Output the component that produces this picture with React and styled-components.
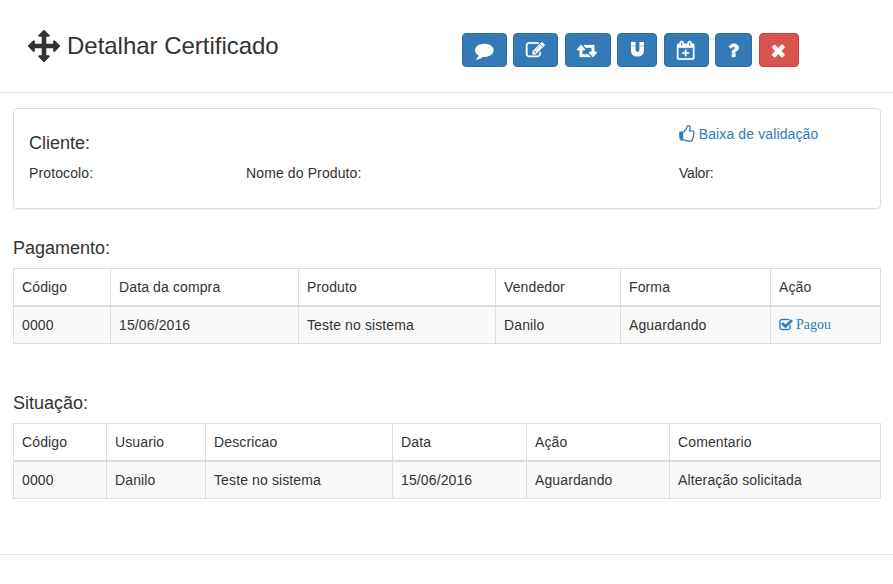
import React from 'react';
import styled, { createGlobalStyle } from 'styled-components';

const GlobalStyle = createGlobalStyle`
  *, *::before, *::after { box-sizing: border-box; }
  body {
    margin: 0;
    background: #fff;
    color: #333;
    font: 14px/20px "Liberation Sans", Arial, sans-serif;
    letter-spacing: 0.12px;
  }
`;

/* name: [view box width, path]; every glyph sits on a 1792-unit em */
const GLYPHS = {
  move: [1792, 'M1792 896q0 26-19 45l-256 256q-19 19-45 19t-45-19-19-45v-128h-384v384h128q26 0 45 19t19 45-19 45l-256 256q-19 19-45 19t-45-19l-256-256q-19-19-19-45t19-45 45-19h128v-384h-384v128q0 26-19 45t-45 19-45-19l-256-256q-19-19-19-45t19-45l256-256q19-19 45-19t45 19 19 45v128h384v-384h-128q-26 0-45-19t-19-45 19-45l256-256q19-19 45-19t45 19l256 256q19 19 19 45t-19 45-45 19h-128v384h384v-128q0-26 19-45t45-19 45 19l256 256q19 19 19 45z'],
  comment: [1792, 'M1792 896q0 174-120 321.5t-326 233-450 85.5q-70 0-145-8-198 175-460 242-49 14-114 22-17 2-30.5-9t-17.5-29v-1q-3-4-.5-12t2-10 4.5-9.5l6-9 7-8.5 8-9q7-8 31-34.5t34.5-38 31-39.5 32.5-51 27-59 26-76q-157-89-247.5-220t-90.5-281q0-130 71-248.5t191-204.5 286-136.5 348-50.5q244 0 450 85.5t326 233 120 321.5z'],
  edit: [1792, 'M888 1184l116-116-152-152-116 116v56h96v96h56zm440-720q-16-16-33 1l-350 350q-17 17-1 33t33-1l350-350q17-17 1-33zm80 594v190q0 119-84.5 203.5t-203.5 84.5h-832q-119 0-203.5-84.5t-84.5-203.5v-832q0-119 84.5-203.5t203.5-84.5h832q63 0 117 25 15 7 18 23 3 17-9 29l-49 49q-14 14-32 8-23-6-45-6h-832q-66 0-113 47t-47 113v832q0 66 47 113t113 47h832q66 0 113-47t47-113v-126q0-13 9-22l64-64q15-15 35-7t20 29zm-96-738l288 288-672 672h-288v-288zm444 132l-92 92-288-288 92-92q28-28 68-28t68 28l152 152q28 28 28 68t-28 68z'],
  retweet: [1920, 'M1280 1504q0 13-9.5 22.5t-22.5 9.5h-960q-8 0-13.5-2t-9-7-5.5-8-3-11.5-1-11.5v-600h-192q-26 0-45-19t-19-45q0-24 15-41l320-384q19-22 49-22t49 22l320 384q15 17 15 41 0 26-19 45t-45 19h-192v384h576q16 0 25 11l160 192q7 10 7 21zm640-416q0 24-15 41l-320 384q-20 23-49 23t-49-23l-320-384q-15-17-15-41 0-26 19-45t45-19h192v-384h-576q-16 0-25-12l-160-192q-7-9-7-20 0-13 9.5-22.5t22.5-9.5h960q8 0 13.5 2t9 7 5.5 8 3 11.5 1 11.5v600h192q26 0 45 19t19 45z'],
  magnet: [1600, 'M0 0h563v470h-563zM1037 0h563v470h-563zM0 540h563v460q0 250 237 250t237-250v-460h563v500q0 752-800 752t-800-752z'],
  calendar: [1664, 'M1536 256q52 0 90 38t38 90v1280q0 52-38 90t-90 38h-1408q-52 0-90-38t-38-90v-1280q0-52 38-90t90-38h128v-96q0-66 47-113t113-47h64q66 0 113 47t47 113v96h384v-96q0-66 47-113t113-47h64q66 0 113 47t47 113v96h128zm-384-96v288q0 14 9 23t23 9h64q14 0 23-9t9-23v-288q0-14-9-23t-23-9h-64q-14 0-23 9t-9 23zm-768 0v288q0 14 9 23t23 9h64q14 0 23-9t9-23v-288q0-14-9-23t-23-9h-64q-14 0-23 9t-9 23zm1152 1504v-1024h-1408v1024h1408zm-640-448v224q0 14-9 23t-23 9h-64q-14 0-23-9t-9-23v-224h-224q-14 0-23-9t-9-23v-64q0-14 9-23t23-9h224v-224q0-14 9-23t23-9h64q14 0 23 9t9 23v224h224q14 0 23 9t9 23v64q0 14-9 23t-23 9h-224z'],
  question: [1792, 'M1088 1256v240q0 16-12 28t-28 12h-240q-16 0-28-12t-12-28v-240q0-16 12-28t28-12h240q16 0 28 12t12 28zm316-600q0 54-15.5 101t-35 76.5-55 59.5-57.5 43.5-61 35.5q-41 23-68.5 65t-27.5 67q0 17-12 32.5t-28 15.5h-240q-15 0-25.5-18.5t-10.5-37.5v-45q0-83 65-156.5t143-108.5q59-27 84-56t25-76q0-42-46.5-74t-107.5-32q-65 0-108 29-35 25-107 115-13 16-31 16-12 0-25-8l-164-125q-13-10-15.5-25t5.5-28q160-266 464-266 80 0 161 31t146 83 106 127.5 41 158.5z'],
  close: [1792, 'M1490 1322q0 40-28 68l-136 136q-28 28-68 28t-68-28l-294-294-294 294q-28 28-68 28t-68-28l-136-136q-28-28-28-68t28-68l294-294-294-294q-28-28-28-68t28-68l136-136q28-28 68-28t68 28l294 294 294-294q28-28 68-28t68 28l136 136q28 28 28 68t-28 68l-294 294 294 294q28 28 28 68z'],
  check: [1792, 'M1472 930v318q0 119-84.5 203.5t-203.5 84.5h-832q-119 0-203.5-84.5t-84.5-203.5v-832q0-119 84.5-203.5t203.5-84.5h832q63 0 117 25 15 7 18 23 3 17-9 29l-49 49q-10 10-23 10-3 0-9-2-23-6-45-6h-832q-66 0-113 47t-47 113v832q0 66 47 113t113 47h832q66 0 113-47t47-113v-254q0-13 9-22l64-64q10-10 23-10 6 0 12 3 20 8 20 29zm231-489l-814 814q-24 24-57 24t-57-24l-430-430q-24-24-24-57t24-57l110-110q24-24 57-24t57 24l263 263 647-647q24-24 57-24t57 24l110 110q24 24 24 57t-24 57z'],
  thumb: [1664, 'M256 1408q0-26-19-45t-45-19-45 19-19 45 19 45 45 19 45-19 19-45zm1280-640q0-51-39-89.5t-89-38.5h-352q0-58 48-159.5t48-160.5q0-98-32-145t-128-47q-26 26-38 85t-30.5 125.5-59.5 109.5q-22 23-77 91-4 5-23 30t-31.5 41-34.5 42.5-40 44-38.5 35.5-40 27-35.5 9h-32v640h32q13 0 31.5 3t33 6.5 38 11 35 11.5 35.5 12.5 29 10.5q211 73 342 73h121q192 0 192-167 0-26-5-56 30-16 47.5-52.5t17.5-73.5-18-69q53-50 53-119 0-25-10-55.5t-25-47.5q32-1 53.5-47t21.5-81zm128-1q0 89-49 163 9 33 9 69 0 77-38 144 3 21 3 43 0 101-60 178 1 139-85 219.5t-227 80.5h-129q-96 0-189.5-22.5t-216.5-65.5q-116-40-138-40h-288q-53 0-90.5-37.5t-37.5-90.5v-640q0-53 37.5-90.5t90.5-37.5h274q36-24 137-155 58-75 107-128 24-25 35.5-85.5t30.5-126.5 62-108q39-37 90-37 84 0 151 32.5t102 101.5 35 186q0 93-48 192h176q104 0 180 76t76 179zM128 640h288v640h-288z'],
};

const Svg = styled.svg`
  display: block;
  flex: none;
  overflow: visible;
  fill: currentColor;
  stroke: currentColor;
  stroke-width: ${(p) => p.$weight};
`;

function Icon({ name, size, weight = 0 }) {
  const [width, path] = GLYPHS[name];
  return (
    <Svg $weight={weight} width={(width / 1792) * size} height={size} viewBox={`0 0 ${width} 1792`} aria-hidden="true">
      <path d={path} />
    </Svg>
  );
}

const Page = styled.div`
  height: 584px;
  overflow: hidden;
`;

const Header = styled.header`
  display: grid;
  grid-template-columns: 433.9px auto;
  align-items: start;
  height: 93px;
  padding: 0 0 0 28px;
  border-bottom: 1px solid #e5e5e5;
`;

const Title = styled.h1`
  display: flex;
  align-items: center;
  gap: 7px;
  height: 32px;
  margin: 30px 0 0;
  font-size: 24px;
  line-height: 32px;
  font-weight: 400;
  letter-spacing: -0.02px;
`;

const Toolbar = styled.div`
  display: grid;
  grid-template-columns: 45px 45px 46px 40px 45px 37px 40px;
  column-gap: 6.5px;
  margin-top: 33px;
  width: max-content;
`;

const ToolButton = styled.button`
  display: flex;
  align-items: center;
  justify-content: center;
  height: 34px;
  padding: ${(p) => (p.$raised ? '0 0 2px 1px' : '0 1px 0 0')};
  border: 1px solid ${(p) => (p.$danger ? '#d43f3a' : '#2e6da4')};
  border-radius: 4px;
  background: ${(p) => (p.$danger ? '#d9534f' : '#337ab7')};
  color: #fff;
`;

const Body = styled.main`
  height: 462px;
  padding: 15px 12px 0 13px;
  border-bottom: 1px solid #e5e5e5;
`;

const Panel = styled.section`
  display: grid;
  grid-template-columns: 217px 433px 1fr;
  grid-template-rows: 29px 20px;
  row-gap: 10px;
  height: 101px;
  padding: 15px 15px 0;
  border: 1px solid #ddd;
  border-radius: 4px;
  box-shadow: 0 1px 1px rgba(0, 0, 0, 0.05);
`;

const Heading = styled.h2`
  margin: ${(p) => p.$top || 0}px 0 0;
  font-size: 18px;
  line-height: 20px;
  font-weight: 400;
  letter-spacing: 0;
`;

const ClientHeading = styled(Heading)`
  grid-column: 1 / 3;
`;

const Value = styled.span`
  letter-spacing: -0.2px;
`;

const Link = styled.a`
  display: flex;
  align-items: center;
  align-self: start;
  gap: 4px;
  height: 20px;
  margin-left: -1px;
  color: #337ab7;
  text-decoration: none;
`;

const SerifLink = styled(Link)`
  gap: 3px;
  height: 21px;
  margin-left: 0;
  padding-top: 1px;
  font-family: "Liberation Serif", "Times New Roman", serif;
  letter-spacing: 0;
`;

const Table = styled.table`
  width: 868px;
  margin: 10px 0 0;
  border: 1px solid #ddd;
  border-collapse: collapse;
  table-layout: fixed;
`;

const HeadCell = styled.th`
  height: 37px;
  padding: 0 8px;
  border: 1px solid #ddd;
  border-bottom-width: 2px;
  font-weight: 400;
  text-align: left;
`;

const Cell = styled.td`
  height: 38px;
  padding: 0 8px;
  border: 1px solid #ddd;
  background: #f9f9f9;
`;

function DataTable({ widths, columns, row }) {
  return (
    <Table>
      <colgroup>{widths.map((w, i) => <col key={i} width={w} />)}</colgroup>
      <thead><tr>{columns.map((c) => <HeadCell key={c}>{c}</HeadCell>)}</tr></thead>
      <tbody><tr>{row.map((c, i) => <Cell key={i}>{c}</Cell>)}</tr></tbody>
    </Table>
  );
}

const ACTIONS = [
  { icon: 'comment', size: 18.67, label: 'Comentar' },
  { icon: 'edit', size: 18.67, weight: 50, label: 'Editar' },
  { icon: 'retweet', size: 18.67, weight: 30, label: 'Alterar' },
  { icon: 'magnet', size: 14.5, label: 'Anexar', raised: true },
  { icon: 'calendar', size: 18.67, weight: 40, label: 'Agendar' },
  { icon: 'question', size: 18.67, weight: 60, label: 'Ajuda' },
  { icon: 'close', size: 18.67, weight: 50, label: 'Fechar', danger: true },
];

export default function App() {
  return (
    <Page>
      <GlobalStyle />
      <Header>
        <Title><Icon name="move" size={32} />Detalhar Certificado</Title>
        <Toolbar>
          {ACTIONS.map((a) => (
            <ToolButton key={a.icon} $danger={a.danger} $raised={a.raised} aria-label={a.label}>
              <Icon name={a.icon} size={a.size} weight={a.weight} />
            </ToolButton>
          ))}
        </Toolbar>
      </Header>
      <Body>
        <Panel>
          <ClientHeading $top={9}>Cliente:</ClientHeading>
          <Link href="#"><Icon name="thumb" size={18} />Baixa de validação</Link>
          <span>Protocolo:</span>
          <span>Nome do Produto:</span>
          <Value>Valor:</Value>
        </Panel>
        <Heading $top={29}>Pagamento:</Heading>
        <DataTable
          widths={[97, 188, 197, 125, 150, 110]}
          columns={['Código', 'Data da compra', 'Produto', 'Vendedor', 'Forma', 'Ação']}
          row={['0000', '15/06/2016', 'Teste no sistema', 'Danilo', 'Aguardando',
            <SerifLink key="paid" href="#"><Icon name="check" size={14} weight={50} />Pagou</SerifLink>]}
        />
        <Heading $top={49}>Situação:</Heading>
        <DataTable
          widths={[93, 99, 187, 134, 143, 211]}
          columns={['Código', 'Usuario', 'Descricao', 'Data', 'Ação', 'Comentario']}
          row={['0000', 'Danilo', 'Teste no sistema', '15/06/2016', 'Aguardando', 'Alteração solicitada']}
        />
      </Body>
    </Page>
  );
}
